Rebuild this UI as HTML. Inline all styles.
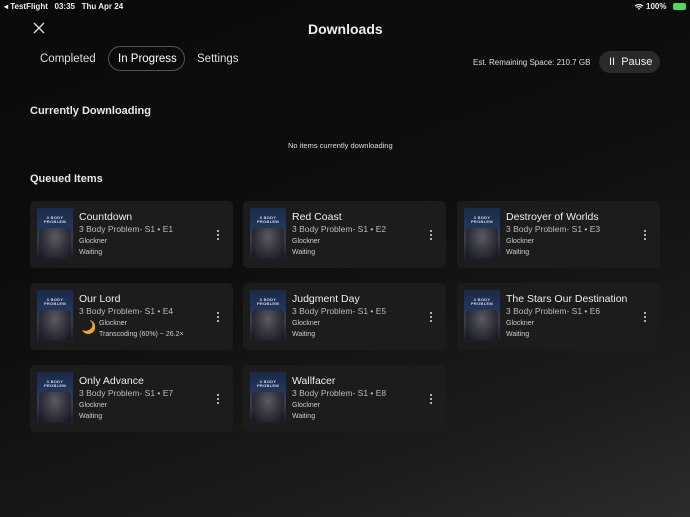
<!DOCTYPE html>
<html><head><meta charset="utf-8"><style>
*{margin:0;padding:0;box-sizing:border-box}
body{width:690px;height:517px;overflow:hidden;font-family:"Liberation Sans",sans-serif;color:#fff;
background:linear-gradient(160deg,#0a0a0a 0%,#0e0e0e 45%,#1c1c1c 80%,#2c2c2c 100%);position:relative}
.a{position:absolute;white-space:nowrap}
.card{position:absolute;width:203px;height:67px;background:#1c1c1c;border-radius:5px}
.poster{position:absolute;left:7px;top:7px;width:36px;height:52px;
background:linear-gradient(180deg,#1a2a48 0%,#22365a 35%,#3a3f4e 60%,#1b1d26 100%);overflow:hidden}
.poster:before{content:"3 BODY\A PROBLEM";white-space:pre;position:absolute;top:8px;left:0;width:100%;text-align:center;font-size:4px;line-height:4px;color:#cde;font-weight:bold;letter-spacing:.3px}
.poster:after{content:"";position:absolute;left:2px;right:2px;top:20px;bottom:2px;background:radial-gradient(ellipse at 50% 30%,#5b5a62 0%,#33343e 50%,#14161c 100%);border-radius:4px 4px 0 0}
.t{position:absolute;left:49px;top:10px;font-size:10.5px;color:#eee}
.s{position:absolute;left:49px;top:23px;font-size:8.5px;color:#bbb}
.u{position:absolute;left:49px;top:37px;font-size:7px;color:#ccc}
.w{position:absolute;left:49px;top:48px;font-size:7px;color:#ccc}
.dots{position:absolute;right:14px;top:29px;width:2px}
.dots i{display:block;width:2px;height:2px;background:#ddd;border-radius:1px;margin-bottom:2px}
</style></head><body>
<div class="a" style="left:4px;top:2px;font-size:8px;font-weight:bold;color:#eee">◂ TestFlight&nbsp;&nbsp; 03:35&nbsp;&nbsp; Thu Apr 24</div>
<div class="a" style="left:646px;top:2px;font-size:8px;font-weight:bold;color:#eee">100%</div>
<svg class="a" style="left:634px;top:3px" width="10" height="8" viewBox="0 0 10 8"><path d="M1 3a6 6 0 0 1 8 0M2.5 4.5a4 4 0 0 1 5 0M4 6a2 2 0 0 1 2 0" stroke="#eee" stroke-width="1.2" fill="none"/></svg>
<div class="a" style="left:673px;top:3px;width:13px;height:7px;border-radius:2px;background:#4cd964"></div>
<svg class="a" style="left:33px;top:22px" width="12" height="12"><path d="M1 1L11 11M11 1L1 11" stroke="#ddd" stroke-width="1.4"/></svg>
<div class="a" style="left:308px;top:21px;font-size:14px;font-weight:bold;color:#eee">Downloads</div>
<div class="a" style="left:40px;top:53px;font-size:11.5px;color:#ddd">Completed</div>
<div class="a" style="left:108px;top:46px;width:77px;height:25px;border:1px solid #555;border-radius:13px"></div>
<div class="a" style="left:118px;top:53px;font-size:11.5px;color:#fff">In Progress</div>
<div class="a" style="left:197px;top:53px;font-size:11.5px;color:#ddd">Settings</div>
<div class="a" style="left:473px;top:58px;font-size:8px;color:#ddd">Est. Remaining Space: 210.7 GB</div>
<div class="a" style="left:599px;top:51px;width:61px;height:22px;border-radius:11px;background:#2a2a2a"></div>
<div class="a" style="left:609px;top:56px;font-size:11px;color:#eee">II&nbsp; Pause</div>
<div class="a" style="left:30px;top:105px;font-size:11px;font-weight:bold;color:#e6e6e6">Currently Downloading</div>
<div class="a" style="left:288px;top:141px;font-size:7.5px;color:#ddd">No items currently downloading</div>
<div class="a" style="left:30px;top:173px;font-size:11px;font-weight:bold;color:#e6e6e6">Queued Items</div>

<div class="card" style="left:30px;top:201px"><div class="poster"></div><div class="t">Countdown</div><div class="s">3 Body Problem- S1 • E1</div><div class="u">Glockner</div><div class="w">Waiting</div><div class="dots"><i></i><i></i><i></i></div></div>
<div class="card" style="left:243px;top:201px"><div class="poster"></div><div class="t">Red Coast</div><div class="s">3 Body Problem- S1 • E2</div><div class="u">Glockner</div><div class="w">Waiting</div><div class="dots"><i></i><i></i><i></i></div></div>
<div class="card" style="left:457px;top:201px"><div class="poster"></div><div class="t">Destroyer of Worlds</div><div class="s">3 Body Problem- S1 • E3</div><div class="u">Glockner</div><div class="w">Waiting</div><div class="dots"><i></i><i></i><i></i></div></div>

<div class="card" style="left:30px;top:283px"><div class="poster"></div><div class="t">Our Lord</div><div class="s">3 Body Problem- S1 • E4</div>
<svg style="position:absolute;left:51px;top:36px" width="14" height="15" viewBox="0 0 14 15"><path d="M8 1A7 7 0 1 1 1 11A6 5 0 0 0 8 1Z" fill="#f0a81c"/></svg>
<div class="u" style="left:69px">Glockner</div><div class="w" style="left:69px">Transcoding (60%) ~ 26.2×</div><div class="dots"><i></i><i></i><i></i></div></div>
<div class="card" style="left:243px;top:283px"><div class="poster"></div><div class="t">Judgment Day</div><div class="s">3 Body Problem- S1 • E5</div><div class="u">Glockner</div><div class="w">Waiting</div><div class="dots"><i></i><i></i><i></i></div></div>
<div class="card" style="left:457px;top:283px"><div class="poster"></div><div class="t">The Stars Our Destination</div><div class="s">3 Body Problem- S1 • E6</div><div class="u">Glockner</div><div class="w">Waiting</div><div class="dots"><i></i><i></i><i></i></div></div>

<div class="card" style="left:30px;top:365px"><div class="poster"></div><div class="t">Only Advance</div><div class="s">3 Body Problem- S1 • E7</div><div class="u">Glockner</div><div class="w">Waiting</div><div class="dots"><i></i><i></i><i></i></div></div>
<div class="card" style="left:243px;top:365px"><div class="poster"></div><div class="t">Wallfacer</div><div class="s">3 Body Problem- S1 • E8</div><div class="u">Glockner</div><div class="w">Waiting</div><div class="dots"><i></i><i></i><i></i></div></div>
</body></html>
